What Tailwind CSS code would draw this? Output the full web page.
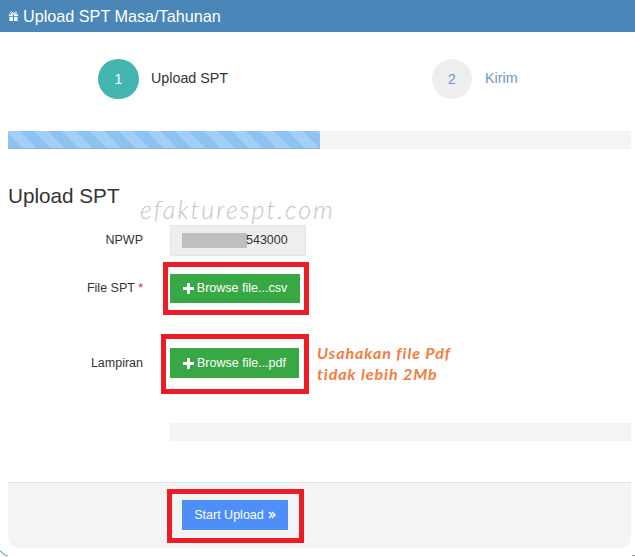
<!doctype html>
<html lang="en">
  <head>
    <meta charset="UTF-8" />
    <title>Upload SPT</title>
    <script src="https://cdn.jsdelivr.net/npm/@tailwindcss/browser@4"></script>
  </head>
  <body class="bg-white font-['Liberation_Sans',Arial,sans-serif] text-[#333]">
    <div class="relative w-[635px] h-[557px] overflow-hidden">
      <!-- Panel heading -->
      <div class="h-8 bg-[#4a86b8] text-white text-[16.2px] flex items-center pl-2 gap-1">
        <svg class="w-[11px] h-[11px]" viewBox="0 0 12 12" fill="#fff">
          <path d="M1 3.500h4.400v2H1zM6.600 3.500H11v2H6.600zM1.600 6.300h3.800V11H1.600zM6.600 6.300h3.800V11H6.600z" />
          <path d="M6 3.200C5 1 3.600.6 2.900 1.200 2.200 2 3 3.200 6 3.200zm0 0c1-2.200 2.400-2.600 3.100-2 .7.800-.1 2-3.100 2z" fill="none" stroke="#fff" stroke-width="1" />
        </svg>
        <span>Upload SPT Masa/Tahunan</span>
      </div>

      <!-- Wizard steps -->
      <div class="flex mt-[27px] h-10 items-center">
        <div class="w-[432px] pl-[98px] flex items-center gap-3">
          <span class="w-[41px] h-10 rounded-full bg-[#45b6af] text-white text-sm flex items-center justify-center">1</span>
          <span class="text-[14.3px]">Upload SPT</span>
        </div>
        <div class="flex items-center gap-[13px]">
          <span class="w-10 h-10 rounded-full bg-[#eeeeee] text-[#6f95c4] text-sm flex items-center justify-center">2</span>
          <span class="text-[14.3px] text-[#6f95c4]">Kirim</span>
        </div>
      </div>

      <!-- Progress bar -->
      <div class="mt-8 mx-2 w-[623px] h-[18px] bg-[#f4f4f4]">
        <div class="w-[312px] h-full border-b border-[#8fb4d6] bg-[repeating-linear-gradient(45deg,#8cc3f3_0,#8cc3f3_10px,#a3cff6_10px,#a3cff6_20px)]"></div>
      </div>

      <h3 class="mt-[35px] ml-2 text-[20.7px] leading-[24px]">Upload SPT</h3>

      <!-- Form -->
      <div class="mt-[17px] flex flex-col text-[12.5px]">
        <div class="flex items-center h-[31px]">
          <label class="w-[143px] text-right">NPWP</label>
          <div class="ml-[27px] w-[136px] h-full bg-[#eeeeee] border border-[#e5e5e5] flex items-center pl-[11px]">
            <span class="w-[65px] h-[15px] bg-[#bfbfbf]"></span>
            <span class="-ml-px">543000</span>
          </div>
        </div>

        <div class="flex items-center h-[29px] mt-[18px]">
          <label class="w-[143px] text-right">File SPT <span class="text-[#e02222]">*</span></label>
          <div class="relative ml-[27px]">
            <button class="w-[130px] h-[29px] bg-[#38a845] text-white flex items-center justify-center gap-[3px]">
              <svg class="w-[11px] h-[11px]" viewBox="0 0 10 10" fill="#fff"><path d="M3.700 0h2.600v3.700H10v2.600H6.300V10H3.700V6.300H0V3.700h3.700z" /></svg>
              Browse file...csv
            </button>
            <div class="absolute left-[-7px] top-[-12px] w-[146px] h-[53px] border-[5px] border-[#ed1c24]"></div>
          </div>
        </div>

        <div class="flex items-center h-[30px] mt-[45px]">
          <label class="w-[143px] text-right">Lampiran</label>
          <div class="relative ml-[27px]">
            <button class="w-[129px] h-[30px] bg-[#38a845] text-white flex items-center justify-center gap-[3px]">
              <svg class="w-[11px] h-[11px]" viewBox="0 0 10 10" fill="#fff"><path d="M3.700 0h2.600v3.700H10v2.600H6.300V10H3.700V6.300H0V3.700h3.700z" /></svg>
              Browse file...pdf
            </button>
            <div class="absolute left-[-9px] top-[-14px] w-[148px] h-[60px] border-[5px] border-[#ed1c24]"></div>
          </div>
          <p class="ml-[18px] -mt-[1px] font-['Lato',sans-serif] font-bold italic text-[16px] leading-[21px] tracking-[0.95px] text-[#f47c3c]">Usahakan file Pdf<br />tidak lebih 2Mb</p>
        </div>

        <div class="ml-[170px] mt-[45px] w-[461px] h-[18px] bg-[#f4f4f4]"></div>
      </div>

      <!-- Form actions -->
      <div class="mt-[41px] mx-2 w-[623px] h-[66px] bg-[#f4f4f4] border-t border-[#e3e3e3] rounded-b-[10px] pt-[17px] pl-[174px]">
        <div class="relative w-[106px]">
          <button class="w-[106px] h-[30px] bg-[#4d8ef8] text-white text-[12.5px] flex items-center justify-center gap-1">
            Start Upload
            <svg class="w-2 h-2" viewBox="0 0 8 8" fill="none" stroke="#fff" stroke-width="1.400"><path d="M1 1l3 3-3 3M4 1l3 3-3 3" /></svg>
          </button>
          <div class="absolute left-[-15px] top-[-11px] w-[137px] h-[54px] border-[5px] border-[#ed1c24]"></div>
        </div>
      </div>

      <!-- Corners of the outer panel, cut off by the screenshot -->
      <svg class="absolute left-0 top-[549px] w-[10px] h-2" viewBox="0 0 10 8" fill="none" stroke="#6fa3cc" stroke-width="1.200"><path d="M0 1.500C2 4.500 4 6 8 7" /></svg>
      <div class="absolute right-0 top-[555px] w-[3px] h-px bg-[#6fa3cc]"></div>

      <!-- Watermark -->
      <span class="absolute left-[140px] top-[194px] font-['Lato',sans-serif] font-light italic text-[25px] leading-[30px] tracking-[2.1px] text-[#c4c4c4]">efakturespt.com</span>
    </div>
  </body>
</html>
